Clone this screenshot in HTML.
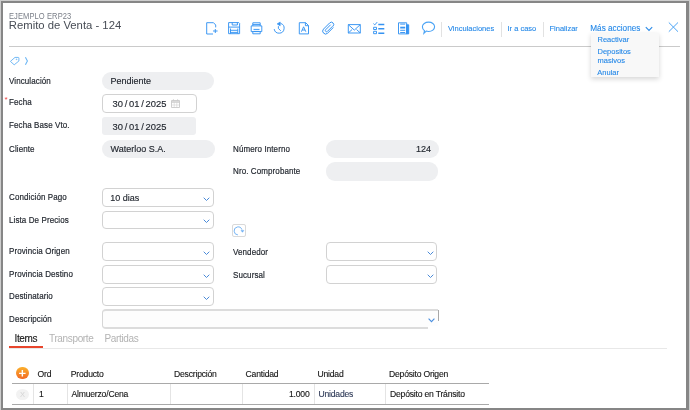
<!DOCTYPE html>
<html><head><meta charset="utf-8">
<style>
*{box-sizing:border-box;margin:0;padding:0}
html,body{width:690px;height:410px;overflow:hidden;background:#fff}
body{font-family:"Liberation Sans",sans-serif;position:relative;color:#333;will-change:transform}
.frameA{position:absolute;left:0;top:0;width:690px;height:410px;background:#cdcdcd}.frameB{position:absolute;left:1px;top:1px;width:688px;height:409px;background:#868686}.frameC{position:absolute;left:3px;top:3px;width:683px;height:405px;background:#fff}
.abs{position:absolute;white-space:nowrap}
.sub{left:8.6px;top:10.7px;font-size:8.4px;color:#7a7f88;letter-spacing:0.1px;transform:scaleX(0.9);transform-origin:0 0}
.title{left:8.8px;top:18.8px;font-size:11.3px;color:#474c55}
.hline{position:absolute;left:8.5px;top:46px;width:671.5px;height:1px;background:#cacaca}
.ico{position:absolute;top:20.3px;width:16px;height:16px}
.link{position:absolute;top:24.3px;font-size:7.5px;color:#2488e8;-webkit-text-stroke:0.1px #2488e8;white-space:nowrap}
.sep{position:absolute;top:22px;width:1px;height:15px;background:#e2e2e2}
.lbl{position:absolute;left:8.5px;font-size:9.2px;color:#1f242c;-webkit-text-stroke:0.2px #1f242c;transform:scaleX(0.87);transform-origin:0 0;letter-spacing:0.12px;white-space:nowrap}
.lbl2{position:absolute;left:232.5px;font-size:9.2px;color:#1f242c;-webkit-text-stroke:0.2px #1f242c;transform:scaleX(0.87);transform-origin:0 0;letter-spacing:0.12px;white-space:nowrap}
.inp{position:absolute;height:18px;border-radius:9px;background:#eeeff1;font-size:9px;color:#1f242c;padding-left:8.5px;line-height:18px;white-space:nowrap;-webkit-text-stroke:0.15px #1f242c}
.box{position:absolute;height:18.5px;border:1px solid #d2d2d2;border-radius:4px;background:#fff;font-size:9px;color:#1f242c;padding-left:7.2px;line-height:18.6px;white-space:nowrap;-webkit-text-stroke:0.15px #1f242c}
.flat{position:absolute;height:18px;border-radius:3px;background:#eeeff1;font-size:9px;color:#1f242c;padding-left:10px;line-height:18px;white-space:nowrap;-webkit-text-stroke:0.15px #1f242c}
.chev{position:absolute;right:2.6px;top:7.6px;width:7px;height:4.5px}
.tab{position:absolute;top:332.8px;font-size:10px;letter-spacing:-0.35px;white-space:nowrap}
.th{position:absolute;top:368.6px;font-size:8.6px;color:#151515;-webkit-text-stroke:0.12px #151515;letter-spacing:-0.2px;white-space:nowrap}
.td{position:absolute;top:389.4px;font-size:8.6px;color:#151515;-webkit-text-stroke:0.12px #151515;letter-spacing:-0.2px;white-space:nowrap}
.vsep{position:absolute;width:1px;background:#e4e4e4;top:384px;height:20px}
</style></head><body>
<div class="frameA"></div><div class="frameB"></div><div class="frameC"></div>
<div class="abs sub">EJEMPLO ERP23</div>
<div class="abs title">Remito de Venta - 124</div>

<!-- toolbar icons -->
<svg class="ico" style="left:204px" viewBox="0 0 16 16" fill="none" stroke="#3593f2" stroke-width="0.95"><path d="M2.7 2.7v11.3h6.3M2.7 2.7h6.8l2.2 2.3v2.4"/><path d="M11.3 9v4M9 11h4.6"/></svg>
<svg class="ico" style="left:226px" viewBox="0 0 16 16" fill="none" stroke="#3593f2" stroke-width="0.95"><path d="M2.6 2.6h10.2l.8.8v10.3H2.6z"/><path d="M6.2 2.6v2.4h5.2V2.6"/><path d="M2.6 7.1h11"/><path d="M4.5 8.5v5.2M11.8 8.5v5.2M4.5 10.3h7.3M4.5 12.4h7.3"/></svg>
<svg class="ico" style="left:248px" viewBox="0 0 16 16" fill="none" stroke="#3593f2" stroke-width="0.95"><path d="M4.8 5.9V2.8h7.4v3.1"/><path d="M4.8 4.6h7.4"/><path d="M3.2 5.9h10.6v5.7H3.2z"/><path d="M5.5 9.4h6"/><path d="M4.8 11.3v2.5h7.4v-2.5M5.6 11.4h5.8"/></svg>
<svg class="ico" style="left:272px" viewBox="0 0 16 16" fill="none" stroke="#3593f2" stroke-width="0.95"><path d="M8.6 3.4A5 5 0 1 1 2.2 9.1"/><path d="M5.1 3.9l3.1-1.9v3.8z" fill="#3593f2" stroke-width=".6"/><path d="M6.4 6.2v2.3l2.4 2.3"/></svg>
<svg class="ico" style="left:295px" viewBox="0 0 16 16" fill="none" stroke="#3593f2" stroke-width="0.95"><path d="M4.3 2.7h6.4l2.8 2.8v8.4H4.3z"/><path d="M10.4 2.7v3h3"/><path d="M6.4 11.7l2.2-4.9 2.2 4.9M7.2 10h2.8"/></svg>
<svg class="ico" style="left:320px" viewBox="0 0 16 16" fill="none" stroke="#3593f2" stroke-width="1"><path d="M12.6 6.2L7.4 11.4a1.2 1.2 0 0 1-1.7-1.7l5-5"/><path d="M13.5 7.3L7.6 13.2a2.9 2.9 0 0 1-4.1-4.1l6.2-6.2a2.3 2.3 0 0 1 3.3 3.3"/></svg>
<svg class="ico" style="left:346px" viewBox="0 0 16 16" fill="none" stroke="#3593f2" stroke-width="0.95"><path d="M2.3 4.6h12v8.4h-12z"/><path d="M2.3 4.6l6 5.5 6-5.5M2.3 13l3.8-3.5M14.3 13l-3.8-3.5"/></svg>
<svg class="ico" style="left:371px" viewBox="0 0 16 16" fill="none" stroke="#3593f2" stroke-width="0.95"><path d="M2.4 3.6l1.4 1.3 2.4-2.8"/><path d="M2.6 7.3h2.9v2.2H2.6z M2.6 11.3h2.9v2.4H2.6z"/><path d="M7.3 4.5h6M7.3 8.8h6M7.3 13.2h6" stroke-width="1.5"/></svg>
<svg class="ico" style="left:395px" viewBox="0 0 16 16" fill="none" stroke="#3593f2" stroke-width="0.95"><path d="M3.5 2.8h8.2v11.1H3.5z"/><path d="M11.5 4.8h2.2v9.1h-2.2z" fill="#3593f2"/><path d="M5.2 4.1h5M5.2 10.3h5M5.2 12.5h5"/><path d="M5.2 7.6h5" stroke-width="1.8"/></svg>
<svg class="ico" style="left:420px" viewBox="0 0 16 16" fill="none" stroke="#4aa3f5" stroke-width="1.1"><path d="M8.6 2.1c3.4 0 6 2.1 6 4.7s-2.6 4.7-6 4.7c-.9 0-1.7-.1-2.4-.4L3.9 13.3l.6-2.6C3.2 9.9 2.4 8.5 2.4 6.8c0-2.6 2.8-4.7 6.2-4.7z"/></svg>
<div class="sep" style="left:441px"></div>
<div class="link" style="left:448px">Vinculaciones</div>
<div class="sep" style="left:501px"></div>
<div class="link" style="left:507.5px">Ir a caso</div>
<div class="sep" style="left:543px"></div>
<div class="link" style="left:549.5px">Finalizar</div>
<div class="link" style="left:590.3px;top:24px;font-size:8.2px">Más acciones</div>
<svg class="abs" style="left:645px;top:26px;width:8px;height:6px" viewBox="0 0 8 6" fill="none" stroke="#2e8ce8" stroke-width="1.1"><path d="M.8 1.2l3.2 3.3 3.2-3.3"/></svg>
<svg class="abs" style="left:667px;top:20.5px;width:12px;height:12px" viewBox="0 0 12 12" fill="none" stroke="#4aa3f5" stroke-width="1"><path d="M1.8 1.5l9.2 9.2M11 1.5L1.8 10.7"/></svg>

<div class="hline"></div>

<!-- dropdown -->
<div class="abs" style="left:591px;top:33px;width:68px;height:44px;background:#f8f8f8;box-shadow:0 2px 5px rgba(0,0,0,.17)"></div>
<div class="link" style="left:597.5px;top:34.8px">Reactivar</div>
<div class="link" style="left:597.5px;top:47.3px">Depositos</div>
<div class="link" style="left:597.5px;top:56.3px">masivos</div>
<div class="link" style="left:597.3px;top:67.7px">Anular</div>

<!-- tag -->
<svg class="abs" style="left:8px;top:55px;width:14px;height:12px" viewBox="0 0 14 12" fill="none" stroke="#72b9f5" stroke-width="1"><path d="M2.4 6.4L7 2.4h3.2a.7 .7 0 0 1 .7.7v2.9L6.2 9.8z"/><circle cx="8.6" cy="4.3" r=".35"/></svg>
<svg class="abs" style="left:23px;top:56px;width:7px;height:10px" viewBox="0 0 7 10" fill="none" stroke="#6db7f5" stroke-width="1.1"><path d="M2.4 1.3l2 3.7-2 3.7"/></svg>

<!-- form -->
<div class="lbl" style="top:75.7px">Vinculación</div>
<div class="inp" style="left:102px;top:72px;width:112px">Pendiente</div>

<div class="abs" style="left:4.5px;top:95.2px;font-size:8px;color:#ee3b3b">*</div>
<div class="lbl" style="top:97.4px">Fecha</div>
<div class="box" style="left:102px;top:93.5px;width:94.5px;height:19px;padding-left:9.5px;line-height:17.5px;font-size:9.4px;word-spacing:-0.85px">30 / 01 / 2025</div>
<svg class="abs" style="left:171px;top:98.5px;width:9px;height:9px" viewBox="0 0 9 9" fill="none" stroke="#c9c9c9" stroke-width=".9"><path d="M.5 1.5h8v7h-8z"/><path d="M.5 3h8" stroke-width="1.4"/><path d="M3.2 3.5v5M5.8 3.5v5M.5 6h8" stroke-width=".5"/><path d="M2.4 .3v1.6M6.6 .3v1.6"/></svg>

<div class="lbl" style="top:120px">Fecha Base Vto.</div>
<div class="flat" style="left:102px;top:117px;width:94px;padding-left:10.5px;line-height:19.6px;font-size:9.4px;word-spacing:-0.85px">30 / 01 / 2025</div>

<div class="lbl" style="top:143.5px">Cliente</div>
<div class="inp" style="left:102px;top:140px;width:112.5px">Waterloo S.A.</div>
<div class="lbl2" style="top:143.5px">Número Interno</div>
<div class="inp" style="left:326px;top:140px;width:113px;text-align:right;padding-right:8px">124</div>
<div class="lbl2" style="top:166px">Nro. Comprobante</div>
<div class="inp" style="left:325.5px;top:162px;width:112.5px;height:18.5px"></div>

<div class="lbl" style="top:192px">Condición Pago</div>
<div class="box" style="left:102px;top:188.3px;width:111.7px">10 dias<svg class="chev" viewBox="0 0 7 4.5" fill="none" stroke="#4a8ad8" stroke-width="1"><path d="M.7 .7l2.8 2.8 2.8-2.8"/></svg></div>
<div class="lbl" style="top:214.5px">Lista De Precios</div>
<div class="box" style="left:102px;top:210.6px;width:111.7px"><svg class="chev" viewBox="0 0 7 4.5" fill="none" stroke="#4a8ad8" stroke-width="1"><path d="M.7 .7l2.8 2.8 2.8-2.8"/></svg></div>
<div class="abs" style="left:232px;top:223.7px;width:13.7px;height:13px;border:1px solid #d9d9d9;border-radius:2px"></div>
<svg class="abs" style="left:233px;top:224.5px;width:12px;height:12px" viewBox="0 0 12 12" fill="none" stroke="#66abf2" stroke-width=".9"><path d="M4.9 9.9A4 4 0 1 1 8.9 4.6"/><path d="M8 5.4h2.8l-1.3 1.9z" fill="#66abf2" stroke-width=".5"/></svg>

<div class="lbl" style="top:246px">Provincia Origen</div>
<div class="box" style="left:102px;top:242.3px;width:111.7px"><svg class="chev" viewBox="0 0 7 4.5" fill="none" stroke="#4a8ad8" stroke-width="1"><path d="M.7 .7l2.8 2.8 2.8-2.8"/></svg></div>
<div class="lbl2" style="top:246.5px">Vendedor</div>
<div class="box" style="left:326.3px;top:242.3px;width:111px"><svg class="chev" viewBox="0 0 7 4.5" fill="none" stroke="#4a8ad8" stroke-width="1"><path d="M.7 .7l2.8 2.8 2.8-2.8"/></svg></div>

<div class="lbl" style="top:268.5px">Provincia Destino</div>
<div class="box" style="left:102px;top:265px;width:111.7px"><svg class="chev" viewBox="0 0 7 4.5" fill="none" stroke="#4a8ad8" stroke-width="1"><path d="M.7 .7l2.8 2.8 2.8-2.8"/></svg></div>
<div class="lbl2" style="top:269.6px">Sucursal</div>
<div class="box" style="left:326.3px;top:265px;width:111px"><svg class="chev" viewBox="0 0 7 4.5" fill="none" stroke="#4a8ad8" stroke-width="1"><path d="M.7 .7l2.8 2.8 2.8-2.8"/></svg></div>

<div class="lbl" style="top:291px">Destinatario</div>
<div class="box" style="left:102px;top:287.3px;width:111.7px"><svg class="chev" viewBox="0 0 7 4.5" fill="none" stroke="#4a8ad8" stroke-width="1"><path d="M.7 .7l2.8 2.8 2.8-2.8"/></svg></div>

<div class="lbl" style="top:313.5px">Descripción</div>
<div class="abs" style="left:102px;top:309px;width:336px;height:19.5px;border:1px solid #d6d6d6;border-top:2px solid #dcdcdc;border-bottom:2px solid #dcdcdc;border-right:none;border-radius:4px 0 0 4px;background:#fdfdfd"></div>
<div class="abs" style="left:428px;top:326px;width:11px;height:3px;background:#fff"></div>
<div class="abs" style="left:438px;top:310px;width:1px;height:11px;background:#a8a8a8"></div>
<svg class="abs" style="left:428.2px;top:317.5px;width:7px;height:5px" viewBox="0 0 7 5" fill="none" stroke="#4a8fe0" stroke-width="1.1"><path d="M.6 .6l2.9 3 2.9-3"/></svg>

<!-- tabs -->
<div class="tab" style="left:14.5px;color:#141414;-webkit-text-stroke:0.1px #141414">Items</div>
<div class="tab" style="left:49px;color:#b3b3b3">Transporte</div>
<div class="tab" style="left:104.5px;color:#b3b3b3">Partidas</div>
<div class="abs" style="left:9px;top:348px;width:658px;height:1px;background:#e8e8e8"></div>
<div class="abs" style="left:9px;top:346px;width:34px;height:2px;background:#e8452c"></div>

<!-- table -->
<div class="abs" style="left:16.3px;top:366.8px;width:12.7px;height:12.7px;border-radius:50%;background:linear-gradient(#fbb02c,#f26a24)"></div>
<svg class="abs" style="left:16.3px;top:366.8px;width:12.7px;height:12.7px" viewBox="0 0 12.7 12.7" stroke="#fff" stroke-width="1.4"><path d="M6.35 3.1v6.5M3.1 6.35h6.5"/></svg>
<div class="th" style="left:37.5px">Ord</div>
<div class="th" style="left:70.8px">Producto</div>
<div class="th" style="left:174px">Descripción</div>
<div class="th" style="left:245.6px">Cantidad</div>
<div class="th" style="left:317.5px">Unidad</div>
<div class="th" style="left:389px">Depósito Origen</div>
<div class="abs" style="left:12px;top:383px;width:477px;height:1px;background:#a9a9a9"></div>
<div class="abs" style="left:16.2px;top:388.8px;width:12.6px;height:11px;border-radius:50%;background:#f2f2f2"></div>
<div class="abs" style="left:20px;top:390px;font-size:7.5px;color:#d4d4d4">X</div>
<div class="td" style="left:39px">1</div>
<div class="td" style="left:71.5px">Almuerzo/Cena</div>
<div class="td" style="left:289px">1.000</div>
<div class="td" style="left:318.5px;color:#2f3b58;-webkit-text-stroke:0.12px #2f3b58">Unidades</div>
<div class="td" style="left:390px">Depósito en Tránsito</div>
<div class="vsep" style="left:33px"></div>
<div class="vsep" style="left:67px"></div>
<div class="vsep" style="left:170px"></div>
<div class="vsep" style="left:242px"></div>
<div class="vsep" style="left:314px"></div>
<div class="vsep" style="left:385px"></div>
<div class="abs" style="left:12px;top:404px;width:477px;height:1px;background:#a9a9a9"></div>
</body></html>
